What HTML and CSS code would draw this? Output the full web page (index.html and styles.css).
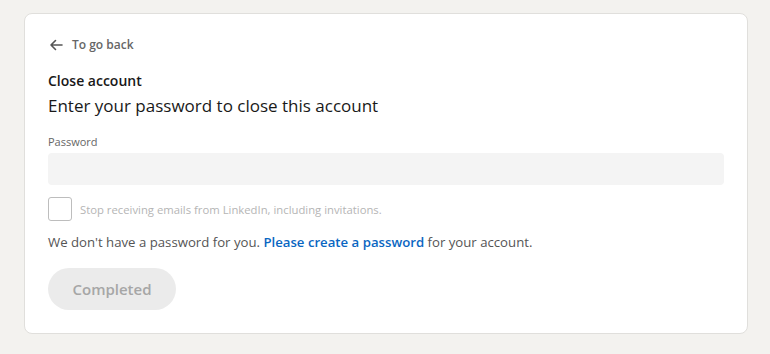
FILE: index.html
```html
<!DOCTYPE html>
<html lang="en">
<head>
	<meta charset="UTF-8">
	<title>Close account</title>
	<meta name="viewport" content="width=device-width, initial-scale=1">
	<link rel="stylesheet" href="styles.css">
</head>
<body>
	<section class="card">
		<a class="back" href="#">
			<svg width="16" height="16" viewBox="0 0 16 16" aria-hidden="true">
				<path d="M14 8H3M7.5 3.5L3 8l4.5 4.5" fill="none" stroke="currentColor" stroke-width="1.6" stroke-linecap="round" stroke-linejoin="round"/>
			</svg>
			<span>To go back</span>
		</a>

		<h2 class="title">Close account</h2>
		<p class="subtitle">Enter your password to close this account</p>

		<label class="field-label" for="password">Password</label>
		<input class="field" id="password" type="password" disabled>

		<label class="check">
			<span class="box"></span>
			<span>Stop receiving emails from LinkedIn, including invitations.</span>
		</label>

		<p class="note">We don't have a password for you. <a href="#">Please create a password</a> for your account.</p>

		<button class="done" disabled>Completed</button>
	</section>
</body>
</html>
```

FILE: styles.css
```css
* {
	box-sizing: border-box;
}

body {
	margin: 0;
	padding: 13px 22px 20px 24px;
	font-family: "Open Sans", "Noto Sans", sans-serif;
	background-color: #f3f2ef;
	color: #191919;
}

.card {
	display: flex;
	flex-direction: column;
	align-items: flex-start;
	background: #fff;
	border: 1px solid #e0dfdc;
	border-radius: 8px;
	padding: 22px 23px 22px 23px;
	height: 321px;
}

.back {
	display: flex;
	align-items: center;
	gap: 8px;
	color: #666;
	text-decoration: none;
	font-size: 12px;
	font-weight: 600;
}

.back svg {
	color: #555;
}

.title {
	margin: 18px 0 0;
	font-size: 14px;
	font-weight: 600;
	line-height: 20px;
}

.subtitle {
	margin: 3px 0 0;
	font-size: 17px;
	line-height: 24px;
}

.field-label {
	margin-top: 16px;
	font-size: 11px;
	line-height: 16px;
	color: #666;
}

.field {
	width: 100%;
	height: 32px;
	margin-top: 3px;
	border: none;
	border-radius: 4px;
	background: #f4f4f4;
}

.check {
	display: flex;
	align-items: center;
	gap: 8px;
	margin-top: 12px;
	font-size: 11.3px;
	color: #b5b5b5;
}

.box {
	width: 24px;
	height: 24px;
	border: 1px solid #bdbdbd;
	border-radius: 3px;
}

.note {
	margin: 11px 0 0;
	font-size: 13.2px;
	line-height: 20px;
	color: #555;
}

.note a {
	color: #0a66c2;
	font-weight: 600;
	text-decoration: none;
}

.done {
	margin-top: 16px;
	width: 128px;
	height: 42px;
	border: none;
	border-radius: 21px;
	background: #ebebeb;
	color: #a6a6a6;
	font-family: inherit;
	font-size: 15px;
	font-weight: 600;
}
```
